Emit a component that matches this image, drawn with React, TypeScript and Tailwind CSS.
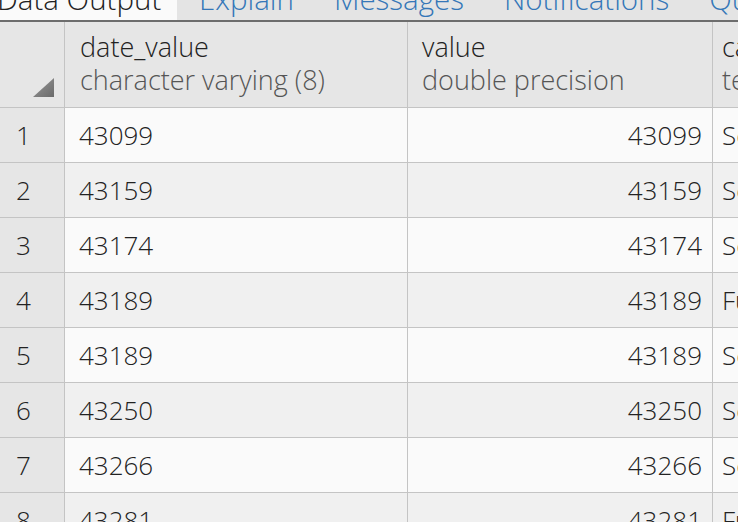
import React from "react";

const rows = [
  ["1", "43099", "43099", "Sell"],
  ["2", "43159", "43159", "Sell"],
  ["3", "43174", "43174", "Sell"],
  ["4", "43189", "43189", "Fund"],
  ["5", "43189", "43189", "Sell"],
  ["6", "43250", "43250", "Sell"],
  ["7", "43266", "43266", "Sell"],
  ["8", "43281", "43281", "Fund"],
];

export default function App() {
  return (
    <div
      className="w-[738px] h-[522px] overflow-hidden bg-[#e6e6e6] flex flex-col font-light"
      style={{ fontFamily: '"Open Sans", "Noto Sans", sans-serif' }}
    >
      {/* Tab bar */}
      <div className="h-[20px] shrink-0 flex overflow-hidden bg-[#e4e4e4] text-[29.5px] leading-[20px]">
        <div className="w-[180px] shrink-0 bg-[#fafafa] text-[#222] -ml-[3px] -mt-[11px] whitespace-nowrap">
          Data Output
        </div>
        <div className="flex gap-[40px] pl-[22px] -mt-[11px] text-[#3577b8] whitespace-nowrap">
          <span>Explain</span>
          <span>Messages</span>
          <span>Notifications</span>
          <span>Query History</span>
        </div>
      </div>
      <div className="h-[2px] shrink-0 bg-[#6d6d6d]" />

      {/* Header */}
      <div className="h-[86px] shrink-0 flex border-b border-[#c4c4c4] bg-[#e6e6e6]">
        <div className="w-[65px] shrink-0 border-r border-[#c4c4c4] relative">
          <svg className="absolute left-[33px] top-[56px]" width="21" height="19" viewBox="0 0 21 19">
            <defs>
              <linearGradient id="tri" x1="0" y1="0" x2="1" y2="1">
                <stop offset="0" stopColor="#9a9a9a" />
                <stop offset="1" stopColor="#6a6a6a" />
              </linearGradient>
            </defs>
            <polygon points="21,0 21,19 0,19" fill="url(#tri)" />
          </svg>
        </div>
        <div className="w-[343px] shrink-0 border-r border-[#c4c4c4] pl-[15px] pt-[8px] whitespace-nowrap">
          <div className="text-[27px] leading-[33px] text-[#222]">date_value</div>
          <div className="text-[27px] leading-[33px] text-[#555]">character varying (8)</div>
        </div>
        <div className="w-[305px] shrink-0 border-r border-[#c4c4c4] pl-[14px] pt-[8px] whitespace-nowrap">
          <div className="text-[27px] leading-[33px] text-[#222]">value</div>
          <div className="text-[27px] leading-[33px] text-[#555]">double precision</div>
        </div>
        <div className="flex-1 pl-[9px] pt-[8px] whitespace-nowrap overflow-hidden">
          <div className="text-[27px] leading-[33px] text-[#222]">category</div>
          <div className="text-[27px] leading-[33px] text-[#555]">text</div>
        </div>
      </div>

      {/* Rows */}
      {rows.map((r, i) => (
        <div
          key={i}
          className={`h-[55px] shrink-0 flex border-b border-[#c4c4c4] text-[26px] leading-[54px] text-[#222] ${
            i % 2 === 0 ? "bg-[#fafafa]" : "bg-[#f0f0f0]"
          }`}
        >
          <div className="w-[65px] shrink-0 border-r border-[#c4c4c4] bg-[#e6e6e6] pl-[16px]">{r[0]}</div>
          <div className="w-[343px] shrink-0 border-r border-[#c4c4c4] pl-[14px]">{r[1]}</div>
          <div className="w-[305px] shrink-0 border-r border-[#c4c4c4] pr-[10px] text-right">{r[2]}</div>
          <div className="flex-1 pl-[9px] whitespace-nowrap overflow-hidden">{r[3]}</div>
        </div>
      ))}
    </div>
  );
}
